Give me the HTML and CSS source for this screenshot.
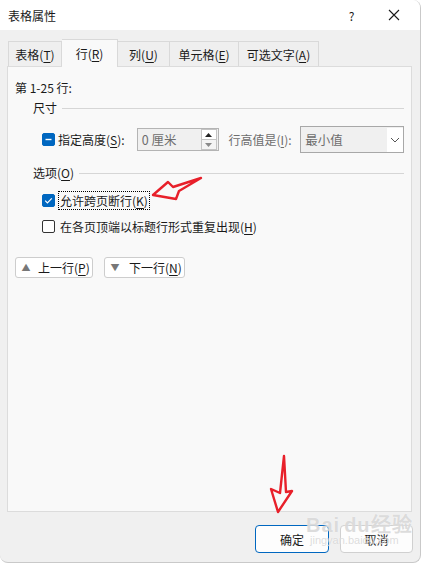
FILE: index.html
```html
<!DOCTYPE html>
<html lang="zh-CN">
<head>
  <meta charset="UTF-8">
  <title>表格属性</title>
  <link rel="stylesheet" href="styles.css">
</head>
<body>
  <div class="janela">
    <div class="barra-titulo">
      <span class="titulo">表格属性</span>
      <span class="ajuda">?</span>
      <span class="fechar">
        <svg width="12" height="12" viewBox="0 0 12 12"><path d="M1 1L11 11M11 1L1 11" stroke="#1a1a1a" stroke-width="1.1"/></svg>
      </span>
    </div>

    <div class="abas">
      <div class="aba a1">表格(<u>T</u>)</div>
      <div class="aba a2 ativa">行(<u>R</u>)</div>
      <div class="aba a3">列(<u>U</u>)</div>
      <div class="aba a4">单元格(<u>E</u>)</div>
      <div class="aba a5">可选文字(<u>A</u>)</div>
    </div>

    <div class="painel">
      <div class="linhas-sel">第 1-25 行:</div>

      <div class="grupo">
        <span>尺寸</span><div class="traco"></div>
      </div>

      <div class="linha-altura">
        <span class="caixa marcada">
          <svg width="13" height="13" viewBox="0 0 13 13"><path d="M3.5 6.5H9.5" stroke="#fff" stroke-width="1.4"/></svg>
        </span>
        <span class="rotulo-altura">指定高度(<u>S</u>):</span>
        <div class="spin">
          <span class="spin-valor">0 厘米</span>
          <div class="spin-botoes">
            <div class="spin-cima"><svg width="7" height="4" viewBox="0 0 7 4"><path d="M0 4L3.5 0L7 4Z" fill="#222"/></svg></div>
            <div class="spin-baixo"><svg width="7" height="4" viewBox="0 0 7 4"><path d="M0 0L3.5 4L7 0Z" fill="#8a8a8a"/></svg></div>
          </div>
        </div>
        <span class="rotulo-valor">行高值是(<u>I</u>):</span>
        <div class="seletor">
          <span class="seletor-valor">最小值</span>
          <span class="seletor-seta">
            <svg width="10" height="6" viewBox="0 0 10 6"><path d="M1 1L5 5L9 1" stroke="#555" stroke-width="1" fill="none"/></svg>
          </span>
        </div>
      </div>

      <div class="grupo grupo-opcoes">
        <span>选项(<u>O</u>)</span><div class="traco"></div>
      </div>

      <div class="opcao primeira">
        <span class="caixa marcada">
          <svg width="13" height="13" viewBox="0 0 13 13"><path d="M3.2 6.6L5.4 8.8L9.8 4.3" stroke="#fff" stroke-width="1.2" fill="none"/></svg>
        </span>
        <span class="rotulo foco">允许跨页断行(<u>K</u>)</span>
      </div>

      <div class="opcao">
        <span class="caixa"></span>
        <span class="rotulo">在各页顶端以标题行形式重复出现(<u>H</u>)</span>
      </div>

      <div class="navegacao">
        <button class="btn-nav nav-cima"><span class="tri">▲</span><span class="txt">上一行(<u>P</u>)</span></button>
        <button class="btn-nav nav-baixo"><span class="tri">▼</span><span class="txt">下一行(<u>N</u>)</span></button>
      </div>
    </div>

    <div class="rodape">
      <button class="btn-rodape ok">确定</button>
      <button class="btn-rodape">取消</button>
    </div>

    <div class="marca-agua">
      <div class="marca-linha1">Bai<span class="pata">du</span>经验</div>
      <div class="marca-linha2">jingyan.baidu.com</div>
    </div>

    <svg class="setas" width="421" height="563" viewBox="0 0 421 563">
      <path d="M153 195L168 182L173 187L201 178L179 191L176 199Z" fill="none" stroke="#e8202a" stroke-width="2.4" stroke-linejoin="round"/>
      <path d="M284 456L280 493L271 489L278 512L292 491L286 492Z" fill="none" stroke="#e8202a" stroke-width="2.4" stroke-linejoin="round"/>
    </svg>
  </div>
</body>
</html>
```

FILE: styles.css
```css
:root {
  --cor-fundo: #f0f0f0;
  --cor-painel: #f9f9f9;
  --cor-borda: #d9d9d9;
  --cor-texto: #1a1a1a;
  --cor-desativado: #6d6d6d;
  --cor-azul: #0067c0;

  --fonte: "Noto Sans CJK SC", "Noto Sans", sans-serif;
}

* {
  margin: 0;
  padding: 0;
  box-sizing: border-box;
}

body {
  font-family: var(--fonte);
  font-size: 12px;
  color: var(--cor-texto);
  background-color: #fff;
}

u {
  text-decoration: underline;
  text-underline-offset: 2px;
}

.janela {
  position: relative;
  width: 421px;
  height: 563px;
  background-color: var(--cor-fundo);
  border-right: 1px solid #c9c9c9;
  border-bottom: 1px solid #c9c9c9;
  border-radius: 0 8px 8px 8px;
  overflow: hidden;
}

.barra-titulo {
  height: 30px;
  background-color: #fff;
  display: flex;
  align-items: center;
  padding-left: 8px;
}

.titulo {
  font-size: 12px;
  flex: 1;
}

.ajuda {
  font-size: 12px;
  width: 45px;
  text-align: center;
}

.fechar {
  width: 46px;
  display: flex;
  justify-content: center;
  padding-right: 6px;
}

/* abas */
.abas {
  display: flex;
  align-items: flex-end;
  margin-top: 9px;
  padding-left: 8px;
  height: 27px;
}

.aba {
  height: 25px;
  display: flex;
  align-items: center;
  justify-content: center;
  border: 1px solid var(--cor-borda);
  border-bottom: none;
  border-left: none;
  background-color: #efefef;
}

.a1 { width: 54px; border-left: 1px solid var(--cor-borda); }
.a2 { width: 56px; }
.a3 { width: 52px; }
.a4 { width: 69px; }
.a5 { width: 80px; }

.aba.ativa {
  height: 28px;
  margin-bottom: -1px;
  background-color: var(--cor-painel);
  position: relative;
  z-index: 1;
}

/* painel */
.painel {
  margin-left: 7px;
  width: 405px;
  height: 446px;
  background-color: var(--cor-painel);
  border: 1px solid #dcdcdc;
  padding: 12px 7px 0 7px;
}

.linhas-sel {
  line-height: 18px;
}

.grupo {
  display: flex;
  align-items: center;
  margin-top: 2px;
  padding-left: 18px;
  line-height: 18px;
}

.grupo .traco {
  flex: 1;
  height: 1px;
  background-color: #d6d6d6;
  margin-left: 5px;
}

.grupo-opcoes {
  margin-top: 11px;
}

.linha-altura {
  display: flex;
  align-items: center;
  margin-top: 9px;
  height: 27px;
  padding-left: 27px;
}

.caixa {
  width: 13px;
  height: 13px;
  border: 1px solid #333;
  border-radius: 2px;
  background-color: #fff;
  display: inline-flex;
  flex-shrink: 0;
}

.caixa.marcada {
  background-color: var(--cor-azul);
  border-color: var(--cor-azul);
}

.caixa svg {
  margin: -1px;
}

.rotulo-altura {
  width: 82px;
  padding-left: 3px;
}

.spin {
  width: 82px;
  height: 23px;
  border: 1px solid #b4b4b4;
  background-color: #f0f0f0;
  display: flex;
  align-items: center;
}

.spin-valor {
  flex: 1;
  padding-left: 4px;
  color: var(--cor-desativado);
  font-size: 12.5px;
}

.spin-botoes {
  width: 16px;
  height: 21px;
  margin-right: 1px;
  display: flex;
  flex-direction: column;
}

.spin-cima,
.spin-baixo {
  flex: 1;
  display: flex;
  align-items: center;
  justify-content: center;
  border: 1px solid #c4c4c4;
}

.spin-cima {
  background-color: #fff;
}

.spin-baixo {
  border-top: none;
  background-color: #f4f4f4;
}

.rotulo-valor {
  color: var(--cor-desativado);
  margin-left: 10px;
  width: 72px;
}

.seletor {
  width: 104px;
  height: 27px;
  border: 1.5px solid #a8a8a8;
  background-color: #f0f0f0;
  display: flex;
  align-items: center;
}

.seletor-valor {
  flex: 1;
  padding-left: 4px;
  color: var(--cor-desativado);
  font-size: 12.5px;
}

.seletor-seta {
  width: 16px;
  height: 24px;
  background-color: #fff;
  display: flex;
  align-items: center;
  justify-content: center;
}

/* opcoes */
.opcao {
  display: flex;
  align-items: center;
  height: 19px;
  margin-top: 7px;
  padding-left: 27px;
}

.opcao.primeira {
  margin-top: 9px;
}

.rotulo {
  margin-left: 3px;
  line-height: 17px;
  padding: 0 1px;
  border: 1px dotted transparent;
}

.rotulo.foco {
  border-color: #000;
}

.navegacao {
  display: flex;
  gap: 11px;
  margin-top: 21px;
}

.btn-nav {
  font-family: var(--fonte);
  font-size: 12px;
  color: var(--cor-texto);
  height: 21px;
  background-color: #fff;
  border: 1px solid #cdcdcd;
  border-radius: 3px;
  display: flex;
  align-items: center;
  padding: 0 0 0 4px;
  white-space: nowrap;
}

.nav-cima { width: 78px; }
.nav-baixo { width: 81px; }

.tri {
  color: #777;
  font-size: 9px;
  width: 12px;
  margin-right: 6px;
}

.nav-baixo .tri {
  margin-right: 8px;
}

/* rodape */
.rodape {
  display: flex;
  justify-content: flex-end;
  gap: 11px;
  margin-top: 13px;
  padding-right: 7px;
}

.btn-rodape {
  font-family: var(--fonte);
  font-size: 12px;
  color: var(--cor-texto);
  width: 73px;
  height: 28px;
  background-color: #fdfdfd;
  border: 1px solid #d0d0d0;
  border-radius: 4px;
}

.btn-rodape.ok {
  width: 74px;
  border: 1.5px solid var(--cor-azul);
}

/* marca d'agua e setas por cima */
.marca-agua {
  position: absolute;
  left: 306px;
  top: 514px;
  color: rgba(190, 190, 190, 0.55);
  text-shadow: 0 0 1px rgba(255, 255, 255, 0.9);
  pointer-events: none;
}

.marca-linha1 {
  font-family: "Liberation Sans", sans-serif;
  font-weight: bold;
  font-size: 20px;
  line-height: 22px;
  letter-spacing: 1px;
}

.pata {
  margin-left: 4px;
}

.marca-linha2 {
  font-family: "Liberation Sans", sans-serif;
  font-size: 11px;
  margin-top: -2px;
  padding-left: 4px;
}

.setas {
  position: absolute;
  left: 0;
  top: 0;
  pointer-events: none;
}
```
